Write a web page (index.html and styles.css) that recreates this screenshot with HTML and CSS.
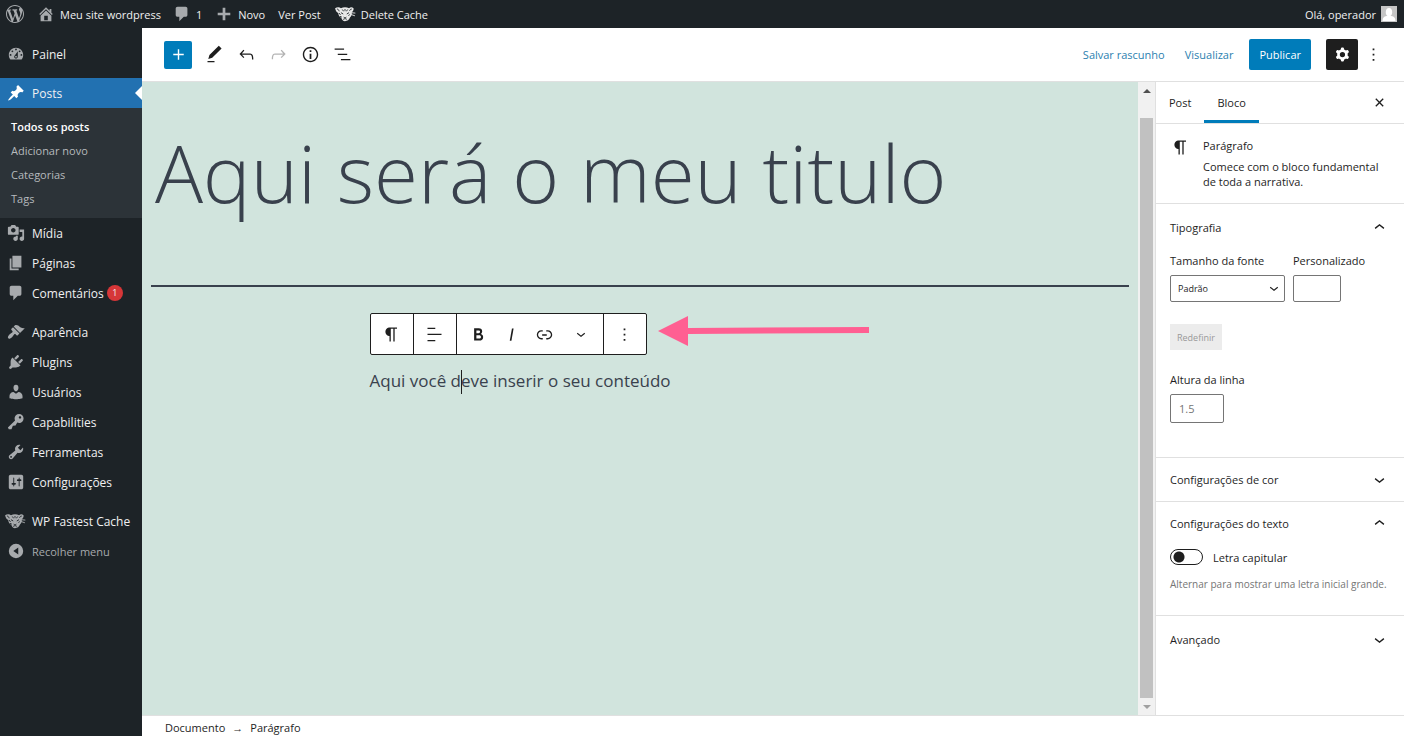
FILE: index.html
```html
<!DOCTYPE html>
<html lang="pt-BR">
<head>
<meta charset="utf-8">
<title>Editar post</title>
<link rel="stylesheet" href="styles.css">
</head>
<body>
<svg class="sprite" aria-hidden="true">
  <defs>
    <symbol id="wp" viewBox="0 0 20 20"><path d="M20 10c0-5.51-4.49-10-10-10C4.48 0 0 4.49 0 10c0 5.52 4.48 10 10 10 5.51 0 10-4.48 10-10zM7.78 15.37L4.37 6.22c.55-.02 1.17-.08 1.17-.08.5-.06.44-1.13-.06-1.11 0 0-1.45.11-2.37.11-.18 0-.37 0-.58-.01C4.12 2.69 6.87 1.11 10 1.11c2.33 0 4.45.87 6.05 2.34-.68-.11-1.65.39-1.65 1.58 0 .74.45 1.36.9 2.1.35.61.55 1.36.55 2.46 0 1.49-1.4 5-1.4 5l-3.03-8.37c.54-.02.82-.17.82-.17.5-.05.44-1.25-.06-1.22 0 0-1.44.12-2.38.12-.87 0-2.33-.12-2.33-.12-.5-.03-.56 1.2-.06 1.22l.92.08 1.26 3.41zM17.41 10c.24-.64.74-1.87.43-4.25.7 1.29 1.05 2.71 1.05 4.25 0 3.29-1.73 6.24-4.4 7.78.97-2.59 1.94-5.2 2.92-7.78zM6.1 18.09C3.12 16.65 1.11 13.53 1.11 10c0-1.3.23-2.48.72-3.59C3.25 10.3 4.67 14.2 6.1 18.09zm4.03-6.63l2.58 6.98c-.86.29-1.76.45-2.71.45-.79 0-1.57-.11-2.29-.33.81-2.38 1.62-4.74 2.42-7.1z"/></symbol>
    <symbol id="home" viewBox="0 0 20 20"><path d="M16 8.5l1.53 1.53-1.06 1.06L10 4.6l-6.47 6.49-1.06-1.06L10 2.5l4 4v-2h2v4zm-6-2.46l6 5.99V18H4v-5.97zM12 17v-5H8v5h4z"/></symbol>
    <symbol id="comment" viewBox="0 0 20 20"><path d="M5 2h9c1.1 0 2 .9 2 2v7c0 1.1-.9 2-2 2h-2l-5 5v-5H5c-1.1 0-2-.9-2-2V4c0-1.1.9-2 2-2z"/></symbol>
    <symbol id="plus" viewBox="0 0 20 20"><path d="M17 8.5v3h-5.5V17h-3v-5.500H3v-3h5.500V3h3v5.500z"/></symbol>
    <symbol id="dashboard" viewBox="0 0 20 20"><path d="M3.760 16h12.480c1.100-1.370 1.760-3.110 1.760-5 0-4.420-3.580-8-8-8s-8 3.580-8 8c0 1.890.66 3.630 1.760 5zM10 4c.55 0 1 .45 1 1s-.45 1-1 1-1-.45-1-1 .45-1 1-1zM6 6c.55 0 1 .45 1 1s-.45 1-1 1-1-.45-1-1 .45-1 1-1zm8 0c.55 0 1 .45 1 1s-.45 1-1 1-1-.45-1-1 .45-1 1-1zm-5.370 5.550L12 7v6c0 1.100-.9 2-2 2s-2-.9-2-2c0-.57.24-1.080.63-1.450zM4 10c.55 0 1 .45 1 1s-.45 1-1 1-1-.45-1-1 .45-1 1-1zm12 0c.55 0 1 .45 1 1s-.45 1-1 1-1-.45-1-1 .45-1 1-1zm-5 3c0-.55-.45-1-1-1s-1 .45-1 1 .45 1 1 1 1-.45 1-1z"/></symbol>
    <symbol id="pin" viewBox="0 0 20 20"><path d="M10.440 3.020l1.820-1.820 6.360 6.350-1.830 1.820c-1.050-.68-2.480-.57-3.410.36l-.75.75c-.92.93-1.040 2.350-.35 3.410l-1.830 1.820-2.410-2.410-2.800 2.790c-.42.42-3.380 2.710-3.800 2.290s1.860-3.390 2.280-3.810l2.790-2.790L4.100 9.360l1.830-1.820c1.050.69 2.480.57 3.400-.36l.75-.75c.93-.92 1.050-2.350.36-3.410z"/></symbol>
    <symbol id="media" viewBox="0 0 20 20"><path d="M13 11V4c0-.55-.45-1-1-1h-1.670L9 1H5L3.670 3H2c-.55 0-1 .45-1 1v7c0 .55.45 1 1 1h10c.55 0 1-.45 1-1zM7 4.500c1.380 0 2.500 1.120 2.500 2.500S8.380 9.500 7 9.500 4.500 8.380 4.500 7 5.620 4.500 7 4.500zM14 6h5v10.500c0 1.380-1.120 2.500-2.500 2.500S14 17.880 14 16.500s1.120-2.500 2.500-2.500c.17 0 .34.02.5.05V9h-3V6zm-4 8.050V13h2v3.500c0 1.380-1.120 2.500-2.500 2.500S7 17.880 7 16.500 8.120 14 9.500 14c.17 0 .34.02.5.05z"/></symbol>
    <symbol id="pages" viewBox="0 0 20 20"><path d="M6 15V2h10v13H6zm-1 1h8v2H3V5h2v11z"/></symbol>
    <symbol id="brush" viewBox="0 0 20 20"><path d="M14.480 11.060L7.410 3.990l1.500-1.500c.5-.56 2.300-.47 3.510.32 1.210.8 1.430 1.280 2.910 2.100 1.180.64 2.450 1.260 4.450.85zm-.71.71L6.700 4.700 4.930 6.470c-.39.39-.39 1.020 0 1.410l1.060 1.060c.39.39.39 1.030 0 1.420-.6.6-1.430 1.110-2.210 1.690-.35.26-.7.53-1.010.84C1.430 14.230.4 16.080 1.400 17.070c.99 1 2.840-.03 4.180-1.360.31-.31.58-.66.85-1.020.57-.78 1.080-1.610 1.690-2.210.39-.39 1.020-.39 1.410 0l1.060 1.060c.39.39 1.020.39 1.410 0z"/></symbol>
    <symbol id="plug" viewBox="0 0 20 20"><path d="M13.110 4.360L9.870 7.600 8 5.730l3.240-3.240c.35-.34 1.050-.2 1.560.32.52.51.66 1.210.31 1.550zm-8 1.770l.91-1.120 9.010 9.010-1.190.84c-.71.71-2.630 1.160-3.820 1.160H6.140L4.900 17.260c-.59.59-1.540.59-2.120 0-.59-.58-.59-1.530 0-2.120l1.240-1.240v-3.880c0-1.130.4-3.190 1.090-3.890zm7.260 3.970l3.240-3.240c.34-.35 1.040-.21 1.550.31.52.51.66 1.210.31 1.550l-3.240 3.250z"/></symbol>
    <symbol id="user" viewBox="0 0 20 20"><path d="M10 9.250c-2.270 0-2.730-3.440-2.730-3.440C7 4.020 7.820 2 9.970 2c2.160 0 2.980 2.020 2.710 3.810 0 0-.41 3.440-2.680 3.440zm0 2.570L12.720 10c2.390 0 4.520 2.330 4.520 4.530v2.490s-3.650 1.130-7.240 1.130c-3.650 0-7.240-1.130-7.240-1.130v-2.490c0-2.250 1.940-4.480 4.470-4.480z"/></symbol>
    <symbol id="key" viewBox="0 0 20 20"><path d="M16.950 2.580c1.960 1.950 1.960 5.120 0 7.070-1.510 1.510-3.750 1.840-5.590 1.010l-1.870 3.310-2.990.31L5 18H2l-1-2 7.950-7.690c-.92-1.870-.62-4.180.93-5.730 1.950-1.960 5.120-1.960 7.070 0zm-2.510 3.790c.74 0 1.330-.6 1.330-1.340 0-.73-.59-1.330-1.330-1.330-.73 0-1.330.6-1.330 1.330 0 .74.6 1.340 1.330 1.340z"/></symbol>
    <symbol id="wrench" viewBox="0 0 20 20"><path d="M16.680 9.770c-1.340 1.340-3.300 1.670-4.950.99l-5.410 6.520c-.99.99-2.590.99-3.580 0s-.99-2.590 0-3.570l6.520-5.420c-.68-1.650-.35-3.610.99-4.950 1.280-1.280 3.120-1.620 4.720-1.060l-2.890 2.890 2.820 2.820 2.860-2.870c.53 1.580.18 3.390-1.080 4.650zM3.810 16.210c.4.39 1.040.39 1.430 0 .4-.4.4-1.040 0-1.430-.39-.4-1.030-.4-1.430 0-.39.39-.39 1.030 0 1.430z"/></symbol>
    <symbol id="sliders" viewBox="0 0 20 20"><path d="M18 16V4c0-1.100-.9-2-2-2H4c-1.100 0-2 .9-2 2v12c0 1.100.9 2 2 2h12c1.100 0 2-.9 2-2zM8 11h1c.55 0 1 .45 1 1s-.45 1-1 1H8v1.500c0 .28-.22.5-.5.5s-.5-.22-.5-.5V13H6c-.55 0-1-.45-1-1s.45-1 1-1h1V5.500c0-.28.22-.5.5-.5s.5.22.5.5V11zm5-2h-1c-.55 0-1-.45-1-1s.45-1 1-1h1V5.500c0-.28.22-.5.5-.5s.5.22.5.5V7h1c.55 0 1 .45 1 1s-.45 1-1 1h-1v5.500c0 .28-.22.5-.5.5s-.5-.22-.5-.5V9z"/></symbol>
    <symbol id="collapse" viewBox="0 0 20 20"><path fill-rule="evenodd" d="M10 2a8 8 0 1 0 0 16 8 8 0 0 0 0-16zm2.500 4v8L7 10z"/></symbol>
    <symbol id="cheetah" viewBox="0 0 24 20">
      <path d="M1 3.500C3 2 6 2 7.500 3.500 10 2 14 2 16.500 3.500 18 2 20 2 21.500 3.500c.3 2-.5 3.500-2 4.500.5 2.500-.5 4.500-2 6-.8 2.500-3 4-5.500 4-2 0-3.500-1.500-4-3.500-2-1-3.500-3-3.500-5.500C2.500 8 1.500 6 1 3.500z"/>
      <g fill="none" stroke="#1d2327" stroke-width="1">
        <path d="M3 4.500c1.500 0 2 1 2.500 2.500M19.500 4.500c-1.500 0-2 1-2.500 2M9 5l1.500 2M12 4.500v2M15 5l-1.500 2M5.500 9l1.500 2M6.500 12.500l2 1"/>
        <path d="M7.500 8.500l2.500 1.500M16.500 8.500L14 10M10.500 13.500l1.500 1 1.500-1M10 16c1.500-1 3-1 4 0M16 12l1-1.500"/>
      </g>
      <path fill="none" stroke="currentColor" d="M18.500 8.500l5 .5M18.500 10.500l4.500 1.500"/>
    </symbol>
    <symbol id="add" viewBox="0 0 24 24"><path d="M18 11.200h-5.200V6h-1.600v5.200H6v1.600h5.200V18h1.600v-5.200H18z"/></symbol>
    <symbol id="pencil" viewBox="0 0 24 24"><path d="M20.100 5.100L16.900 2 6.200 12.700l-1.300 4.400 4.500-1.300L20.100 5.100zM4 20.800h8v-1.500H4v1.500z"/></symbol>
    <symbol id="undo" viewBox="0 0 24 24"><path d="M18.300 11.700c-.6-.6-1.400-.9-2.300-.9H6.700l2.900-3.300-1.100-1-4.500 5L8.500 16l1-1-2.700-2.700H16c.5 0 .9.200 1.300.5 1 1 1 3.400 1 4.500v.3h1.500v-.2c0-1.500 0-4.300-1.500-5.700z"/></symbol>
    <symbol id="redo" viewBox="0 0 24 24"><path d="M15.600 6.500l-1.100 1 2.900 3.300H8c-.9 0-1.700.3-2.300.9-1.400 1.500-1.400 4.200-1.400 5.600v.2h1.500v-.3c0-1.100 0-3.500 1-4.500.3-.3.7-.5 1.300-.5h9.200L14.500 15l1.100 1.100 4.600-4.600-4.600-5z"/></symbol>
    <symbol id="info" viewBox="0 0 24 24"><path d="M12 3.200c-4.800 0-8.800 3.900-8.800 8.800 0 4.800 3.900 8.800 8.800 8.800 4.800 0 8.800-3.900 8.800-8.800 0-4.800-4-8.800-8.800-8.800zm0 16c-4 0-7.200-3.300-7.200-7.200C4.800 8 8 4.800 12 4.800s7.200 3.300 7.200 7.200c0 4-3.200 7.200-7.200 7.200zM11 17h2v-6h-2v6zm0-8h2V7h-2v2z"/></symbol>
    <symbol id="outline" viewBox="0 0 24 24"><path d="M13.800 5.200H3v1.500h10.800V5.200zm-3.600 12v1.500H21v-1.500H10.200zm7.200-6H6.600v1.500h10.800v-1.500z"/></symbol>
    <symbol id="cog" viewBox="0 0 24 24"><path fill-rule="evenodd" d="M10.289 4.836A1 1 0 0111.275 4h1.306a1 1 0 01.987.836l.244 1.466c.787.26 1.503.679 2.108 1.218l1.393-.522a1 1 0 011.216.437l.653 1.130a1 1 0 01-.23 1.273l-1.148.944a6.025 6.025 0 010 2.435l1.149.946a1 1 0 01.23 1.272l-.653 1.130a1 1 0 01-1.216.437l-1.394-.522c-.605.54-1.320.958-2.108 1.218l-.244 1.466a1 1 0 01-.987.836h-1.306a1 1 0 01-.986-.836l-.244-1.466a5.995 5.995 0 01-2.108-1.218l-1.394.522a1 1 0 01-1.217-.436l-.653-1.131a1 1 0 01.23-1.272l1.149-.946a6.026 6.026 0 010-2.435l-1.148-.944a1 1 0 01-.23-1.272l.653-1.131a1 1 0 011.217-.437l1.393.522a5.994 5.994 0 012.108-1.218l.244-1.466zM14.929 12a3 3 0 11-6 0 3 3 0 016 0z"/></symbol>
    <symbol id="more" viewBox="0 0 24 24"><path d="M13 19h-2v-2h2v2zm0-6h-2v-2h2v2zm0-6h-2V5h2v2z"/></symbol>
    <symbol id="pilcrow" viewBox="0 0 24 24"><path d="M18.300 4H9.900v-.1l-.9.2c-2.300.4-4 2.400-4 4.800s1.700 4.400 4 4.800l.7.1V20h1.500V5.500h2.900V20h1.500V5.500h2.700V4z"/></symbol>
    <symbol id="align" viewBox="0 0 24 24"><path d="M4 19.800h8.900v-1.500H4v1.500zm8.900-15.600H4v1.500h8.900V4.200zm-8.900 7v1.500h16v-1.500H4z"/></symbol>
    <symbol id="bold" viewBox="0 0 24 24"><path d="M14.700 11.300c1-.6 1.500-1.600 1.500-3 0-2.300-1.300-3.400-4-3.400H7v14h5.800c1.400 0 2.500-.3 3.300-1 .8-.7 1.200-1.700 1.200-2.900.1-1.900-.8-3.100-2.600-3.700zm-5.100-4h2.300c.6 0 1.100.1 1.400.4.3.3.5.7.5 1.200s-.2 1-.5 1.200c-.3.3-.8.4-1.400.4H9.600V7.300zm4.600 9c-.4.3-1 .4-1.700.4H9.600v-3.900h2.900c.7 0 1.300.2 1.700.5.4.3.6.8.6 1.500s-.2 1.200-.6 1.500z"/></symbol>
    <symbol id="italic" viewBox="0 0 24 24"><path d="M12.500 5L10 19h1.900l2.500-14z"/></symbol>
    <symbol id="link" viewBox="0 0 24 24"><path d="M15.600 7.200H14v1.500h1.600c2 0 3.700 1.700 3.700 3.700s-1.700 3.700-3.700 3.700H14v1.500h1.600c2.800 0 5.200-2.300 5.200-5.200 0-2.900-2.300-5.200-5.200-5.200zM4.700 12.400c0-2 1.700-3.700 3.700-3.700H10V7.200H8.400c-2.900 0-5.200 2.300-5.200 5.200 0 2.900 2.300 5.200 5.200 5.200H10v-1.500H8.400c-2 0-3.700-1.700-3.700-3.700zm4.600.9h5.300v-1.500H9.300v1.500z"/></symbol>
    <symbol id="down" viewBox="0 0 24 24"><path d="M17.500 11.600L12 16l-5.500-4.400.9-1.200L12 14l4.500-3.600 1 1.200z"/></symbol>
    <symbol id="up" viewBox="0 0 24 24"><path d="M6.500 12.400L12 8l5.500 4.400-.9 1.200L12 10l-4.500 3.600-1-1.200z"/></symbol>
    <symbol id="close" viewBox="0 0 24 24"><path d="M12 13.060l3.712 3.713 1.061-1.060L13.061 12l3.712-3.712-1.060-1.060L12 10.938 8.288 7.227l-1.061 1.060L10.939 12l-3.712 3.712 1.060 1.061L12 13.061z"/></symbol>
  </defs>
</svg>

<header class="adminbar">
  <a class="bar-link bar-logo" href="#" aria-label="WordPress"><svg class="icon-l"><use href="#wp"/></svg></a>
  <a class="bar-link bar-site" href="#"><svg class="icon-m"><use href="#home"/></svg>Meu site wordpress</a>
  <a class="bar-link bar-comments" href="#"><svg class="icon-m"><use href="#comment"/></svg>1</a>
  <a class="bar-link bar-new" href="#"><svg class="icon-m"><use href="#plus"/></svg>Novo</a>
  <a class="bar-link bar-view" href="#">Ver Post</a>
  <a class="bar-link bar-cache" href="#"><svg class="icon-cat"><use href="#cheetah"/></svg>Delete Cache</a>
  <a class="bar-link bar-user" href="#">Olá, operador<svg class="avatar" viewBox="0 0 16 16"><path fill="#c5c5c5" d="M0 0h16v16H0z"/><path fill="#fff" d="M8 2c4 0 4 7 1.500 8 2.500 0 5 1 5 5h-13c0-4 2.500-5 5-5C4 9 4 2 8 2z"/></svg></a>
</header>

<div class="shell">
  <nav class="menu" aria-label="Menu principal">
    <div class="group">
      <a class="item" href="#"><svg class="icon-m"><use href="#dashboard"/></svg>Painel</a>
    </div>
    <div class="group">
      <a class="item current" href="#"><svg class="icon-m"><use href="#pin"/></svg>Posts</a>
      <div class="submenu">
        <a class="sub selected" href="#">Todos os posts</a>
        <a class="sub" href="#">Adicionar novo</a>
        <a class="sub" href="#">Categorias</a>
        <a class="sub" href="#">Tags</a>
      </div>
      <a class="item" href="#"><svg class="icon-m"><use href="#media"/></svg>Mídia</a>
      <a class="item" href="#"><svg class="icon-m"><use href="#pages"/></svg>Páginas</a>
      <a class="item" href="#"><svg class="icon-m"><use href="#comment"/></svg>Comentários<span class="count">1</span></a>
    </div>
    <div class="group">
      <a class="item" href="#"><svg class="icon-m"><use href="#brush"/></svg>Aparência</a>
      <a class="item" href="#"><svg class="icon-m"><use href="#plug"/></svg>Plugins</a>
      <a class="item" href="#"><svg class="icon-m"><use href="#user"/></svg>Usuários</a>
      <a class="item" href="#"><svg class="icon-m"><use href="#key"/></svg>Capabilities</a>
      <a class="item" href="#"><svg class="icon-m"><use href="#wrench"/></svg>Ferramentas</a>
      <a class="item" href="#"><svg class="icon-m"><use href="#sliders"/></svg>Configurações</a>
    </div>
    <div class="group">
      <a class="item wide" href="#"><svg class="icon-cat"><use href="#cheetah"/></svg>WP Fastest Cache</a>
      <button class="item collapse" type="button"><svg class="icon-m"><use href="#collapse"/></svg>Recolher menu</button>
    </div>
  </nav>

  <div class="editor">
    <div class="topbar">
      <div class="tools">
        <button class="tool primary" type="button" aria-label="Adicionar bloco"><svg class="icon-e"><use href="#add"/></svg></button>
        <button class="tool" type="button" aria-label="Ferramentas"><svg class="icon-e"><use href="#pencil"/></svg></button>
        <button class="tool" type="button" aria-label="Desfazer"><svg class="icon-e"><use href="#undo"/></svg></button>
        <button class="tool" type="button" aria-label="Refazer" disabled><svg class="icon-e"><use href="#redo"/></svg></button>
        <button class="tool" type="button" aria-label="Detalhes"><svg class="icon-e"><use href="#info"/></svg></button>
        <button class="tool" type="button" aria-label="Navegação de blocos"><svg class="icon-e"><use href="#outline"/></svg></button>
      </div>
      <div class="actions">
        <button class="text-btn" type="button">Salvar rascunho</button>
        <button class="text-btn" type="button">Visualizar</button>
        <button class="publish" type="button">Publicar</button>
        <button class="settings" type="button" aria-label="Configurações"><svg class="icon-e"><use href="#cog"/></svg></button>
        <button class="options" type="button" aria-label="Opções"><svg class="icon-e"><use href="#more"/></svg></button>
      </div>
    </div>

    <div class="workspace">
      <main class="canvas">
        <h1 class="title">Aqui será o meu titulo</h1>
        <div class="block">
          <div class="toolbar-row">
            <div class="toolbar" role="toolbar" aria-label="Ferramentas do bloco">
              <div class="tb-group"><button class="tb" type="button" aria-label="Parágrafo"><svg class="icon-e"><use href="#pilcrow"/></svg></button></div>
              <div class="tb-group"><button class="tb" type="button" aria-label="Alinhar"><svg class="icon-e"><use href="#align"/></svg></button></div>
              <div class="tb-group formats">
                <button class="tb" type="button" aria-label="Negrito"><svg class="icon-e"><use href="#bold"/></svg></button>
                <button class="tb" type="button" aria-label="Itálico"><svg class="icon-e"><use href="#italic"/></svg></button>
                <button class="tb" type="button" aria-label="Link"><svg class="icon-e"><use href="#link"/></svg></button>
                <button class="tb tb-more" type="button" aria-label="Mais"><svg class="icon-s"><use href="#down"/></svg></button>
              </div>
              <div class="tb-group"><button class="tb" type="button" aria-label="Opções do bloco"><svg class="icon-e"><use href="#more"/></svg></button></div>
            </div>
            <svg class="arrow" viewBox="0 0 212 32" aria-hidden="true"><path fill="#ff5f92" d="M0 16L30 1v12l181-1v6l-181 1v12z"/></svg>
          </div>
          <p class="para">Aqui você d<span class="caret"></span>eve inserir o seu conteúdo</p>
        </div>
      </main>

      <div class="scrollbar" aria-hidden="true">
        <span class="sb-up"></span>
        <span class="sb-thumb"></span>
        <span class="sb-down"></span>
      </div>

      <aside class="inspector">
        <div class="tabs">
          <button class="tab" type="button">Post</button>
          <button class="tab active" type="button">Bloco</button>
          <button class="tab-close" type="button" aria-label="Fechar"><svg class="icon-e"><use href="#close"/></svg></button>
        </div>
        <section class="card">
          <svg class="icon-e"><use href="#pilcrow"/></svg>
          <div>
            <h2 class="card-title">Parágrafo</h2>
            <p class="card-text">Comece com o bloco fundamental de toda a narrativa.</p>
          </div>
        </section>
        <section class="panel typography">
          <button class="panel-head" type="button">Tipografia<svg class="icon-e"><use href="#up"/></svg></button>
          <div class="fields">
            <div class="field">
              <label class="label" for="size">Tamanho da fonte</label>
              <div class="select-wrap">
                <select class="select" id="size"><option>Padrão</option></select>
                <svg class="icon-s"><use href="#down"/></svg>
              </div>
            </div>
            <div class="field">
              <label class="label" for="custom">Personalizado</label>
              <input class="input custom" id="custom" type="text">
            </div>
          </div>
          <button class="reset" type="button" disabled>Redefinir</button>
          <div class="field">
            <label class="label" for="line">Altura da linha</label>
            <input class="input line" id="line" type="text" placeholder="1.5">
          </div>
        </section>
        <section class="panel">
          <button class="panel-head" type="button">Configurações de cor<svg class="icon-e"><use href="#down"/></svg></button>
        </section>
        <section class="panel text-settings">
          <button class="panel-head" type="button">Configurações do texto<svg class="icon-e"><use href="#up"/></svg></button>
          <div class="toggle-row">
            <input class="toggle" id="cap" type="checkbox">
            <label class="label-inline" for="cap">Letra capitular</label>
          </div>
          <p class="help">Alternar para mostrar uma letra inicial grande.</p>
        </section>
        <section class="panel last">
          <button class="panel-head" type="button">Avançado<svg class="icon-e"><use href="#down"/></svg></button>
        </section>
      </aside>
    </div>

    <footer class="crumbs"><span>Documento</span><span class="sep">→</span><span>Parágrafo</span></footer>
  </div>
</div>
</body>
</html>
```
FILE: styles.css
```css
* { box-sizing: border-box; }
body {
  margin: 0;
  height: 100vh;
  display: flex;
  flex-direction: column;
  overflow: hidden;
  font-family: "Open Sans", "Noto Sans", sans-serif;
  font-size: 12px;
  color: #1e1e1e;
  background: #fff;
}
button, input, select { font: inherit; color: inherit; margin: 0; }
button { border: 0; padding: 0; background: none; }
a { color: inherit; text-decoration: none; }
h1, h2, p { margin: 0; font-weight: 400; }
svg { flex: none; fill: currentColor; display: block; }
.sprite { position: absolute; width: 0; height: 0; }
.icon-s { width: 18px; height: 18px; }
.icon-m { width: 18px; height: 18px; }
.icon-l { width: 18px; height: 18px; }
.icon-e { width: 21px; height: 21px; }
.icon-cat { width: 22px; height: 18px; }

/* Admin bar */
.adminbar {
  flex: none;
  display: flex;
  align-items: center;
  height: 28px;
  padding: 0 7px 0 6px;
  background: #1d2327;
  color: #f0f0f1;
  font-size: 11px;
}
.bar-link { display: flex; align-items: center; gap: 5px; margin-right: 13px; }
.bar-link svg { color: #a7aaad; }
.bar-site { margin-right: 12px; }
.bar-link.bar-cache svg { color: #e8e8e8; }
.bar-user { margin: 0 0 0 auto; }
.avatar { width: 16px; height: 16px; }

.shell { flex: 1; min-height: 0; display: flex; }

/* Side menu */
.menu {
  flex: none;
  width: 142px;
  padding-top: 11px;
  background: #1d2327;
  color: #f0f0f1;
}
.group { margin-bottom: 9px; }
.item {
  display: flex;
  align-items: center;
  gap: 7px;
  width: 100%;
  height: 30px;
  padding-left: 7px;
  position: relative;
  white-space: nowrap;
}
.item svg { color: #a7aaad; }
.wide { padding-left: 4px; gap: 6px; }
.current { background: #2271b1; }
.item.current svg { color: #fff; }
.current::after {
  content: "";
  position: absolute;
  right: 0;
  border: 7px solid transparent;
  border-right-color: #fff;
  border-left-width: 0;
}
.submenu { padding: 7px 0; background: #2c3338; }
.sub {
  display: block;
  padding-left: 11px;
  line-height: 24px;
  font-size: 11px;
  color: #b6babd;
}
.selected { color: #fff; font-weight: 600; }
.count {
  margin-left: -4px;
  width: 16px;
  height: 16px;
  border-radius: 50%;
  background: #d63638;
  font-size: 9px;
  line-height: 16px;
  text-align: center;
}
.collapse { color: #a7aaad; font-size: 11px; }

/* Editor header */
.editor { flex: 1; min-width: 0; display: flex; flex-direction: column; }
.topbar {
  flex: none;
  display: flex;
  align-items: center;
  justify-content: space-between;
  height: 54px;
  padding: 0 20px 0 22px;
  border-bottom: 1px solid #e0e0e0;
}
.tools, .actions { display: flex; align-items: center; }
.tools { gap: 4px; }
.tool {
  display: grid;
  place-items: center;
  width: 28px;
  height: 28px;
  border-radius: 2px;
}
.tool:disabled { color: #b4b4b4; }
.primary { background: #007cba; color: #fff; margin-right: 4px; }
.actions { color: #2b7fb0; }
.text-btn { margin-right: 20px; font-size: 11px; }
.text-btn:nth-child(2) { margin-right: 16px; }
.publish {
  height: 31px;
  padding: 0 10px;
  border-radius: 2px;
  background: #007cba;
  color: #fff;
  font-size: 11px;
  font-weight: 500;
}
.settings {
  display: grid;
  place-items: center;
  width: 32px;
  height: 31px;
  margin: 0 5px 0 15px;
  border-radius: 2px;
  background: #1e1e1e;
  color: #fff;
}
.options { color: #1e1e1e; }

/* Canvas */
.workspace { flex: 1; min-height: 0; display: flex; }
.canvas {
  flex: 1;
  min-width: 0;
  padding: 0 9px;
  background: #d1e4dd;
  color: #39414d;
}
.title {
  height: 205px;
  padding: 34px 4px 0;
  border-bottom: 2px solid #39414d;
  font-size: 80px;
  font-weight: 300;
  line-height: 112px;
  white-space: nowrap;
}
.block { width: 541px; margin: 26px auto 0; }
.toolbar-row { display: flex; align-items: flex-start; gap: 11px; }
.toolbar {
  flex: none;
  display: flex;
  height: 42px;
  border: 1px solid #1e1e1e;
  border-radius: 2px;
  background: #fff;
  color: #1e1e1e;
}
.tb-group { display: flex; padding: 0 5px; }
.tb-group + .tb-group { border-left: 1px solid #1e1e1e; }
.tb { display: grid; place-items: center; width: 32px; height: 40px; }
.formats .tb { width: 33px; }
.formats .tb-more { margin-left: 4px; }
.arrow { width: 212px; height: 32px; margin-top: 2px; }
.para { margin-top: 13px; font-size: 17px; line-height: 26px; }
.caret {
  display: inline-block;
  width: 1px;
  height: 24px;
  margin-right: -1px;
  vertical-align: middle;
  background: #1e1e1e;
}

/* Scrollbar */
.scrollbar {
  flex: none;
  display: flex;
  flex-direction: column;
  align-items: center;
  width: 17px;
  padding: 7px 0 6px;
  background: #f1f1f1;
}
.sb-up, .sb-down { border: 4px solid transparent; }
.sb-up { border-top: 0; border-bottom-color: #505050; }
.sb-down { border-bottom: 0; border-top-color: #a0a0a0; }
.sb-thumb { flex: 1; width: 13px; margin: 25px 0 7px; background: #c1c1c1; }

/* Inspector */
.inspector { flex: none; width: 249px; border-left: 1px solid #e0e0e0; font-size: 11px; }
.tabs { display: flex; height: 42px; border-bottom: 1px solid #e0e0e0; }
.tab { padding: 0 13px; font-weight: 500; }
.active { border-bottom: 3px solid #007cba; padding-top: 3px; }
.tab-close { margin: 0 14px 0 auto; }
.card {
  display: flex;
  gap: 12px;
  height: 80px;
  padding: 13px 14px 0;
  border-bottom: 1px solid #e0e0e0;
}
.card-title { font-size: 11px; font-weight: 500; line-height: 18px; }
.card-text { margin-top: 4px; line-height: 15px; }
.panel { padding: 0 14px; border-bottom: 1px solid #e0e0e0; }
.panel-head {
  display: flex;
  align-items: center;
  justify-content: space-between;
  width: 100%;
  height: 43px;
  font-weight: 500;
}
.typography { padding-top: 2px; padding-bottom: 34px; }
.fields { display: flex; gap: 8px; margin-top: 3px; }
.field { display: flex; flex-direction: column; align-items: flex-start; gap: 5px; }
.label { line-height: 18px; white-space: nowrap; }
.select-wrap { position: relative; }
.select-wrap svg { position: absolute; right: 2px; top: 4px; pointer-events: none; }
.select {
  appearance: none;
  width: 115px;
  height: 27px;
  padding: 0 7px;
  border: 1px solid #757575;
  border-radius: 2px;
  background: #fff;
  font-size: 9px;
}
.input { border: 1px solid #757575; border-radius: 2px; padding: 0 8px; background: #fff; }
.input::placeholder { color: #757575; opacity: 1; }
.custom { width: 48px; height: 27px; }
.line { width: 54px; height: 29px; }
.reset {
  display: block;
  height: 26px;
  margin: 22px 0 21px;
  padding: 0 7px;
  background: #ececec;
  color: #999;
  font-size: 9px;
}
.text-settings { padding-bottom: 22px; }
.toggle-row { display: flex; align-items: center; gap: 10px; height: 24px; }
.toggle {
  appearance: none;
  width: 33px;
  height: 16px;
  border: 1px solid #1e1e1e;
  border-radius: 8px;
  background: radial-gradient(circle at 8px 7px, #1e1e1e 5px, #fff 6px);
}
.help { margin-top: 6px; font-size: 10px; line-height: 18px; color: #757575; white-space: nowrap; }
.last { border-bottom: 0; padding-top: 2px; }

/* Breadcrumbs */
.crumbs {
  flex: none;
  display: flex;
  align-items: center;
  gap: 7px;
  height: 21px;
  padding: 3px 23px 0;
  border-top: 1px solid #e0e0e0;
  font-size: 11px;
}
```
